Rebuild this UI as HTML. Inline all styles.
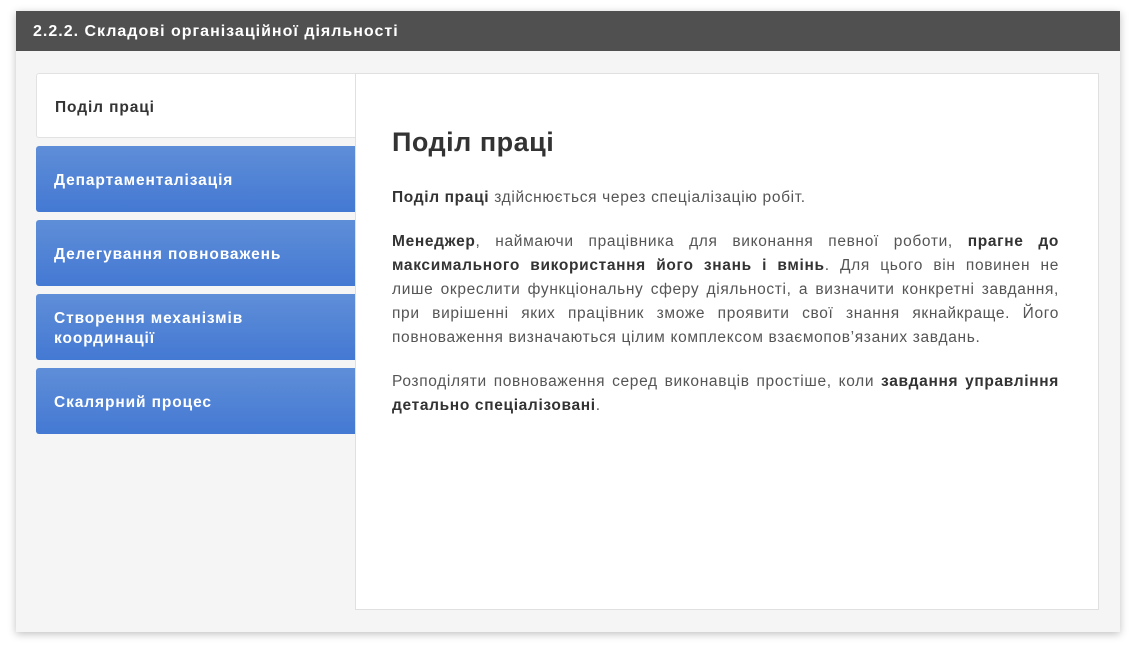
<!DOCTYPE html><html><head><meta charset="utf-8"><style>
body{margin:0;width:1136px;height:653px;background:#fff;font-family:"Liberation Sans","DejaVu Sans",sans-serif;position:relative;overflow:hidden}
.card{position:absolute;left:16px;top:11px;width:1104px;height:621px;background:#f5f5f5;box-shadow:0 2px 8px rgba(0,0,0,.25)}
.hd{height:40px;background:#505050;color:#fff;font-weight:bold;font-size:16px;line-height:42px;padding-left:17px;letter-spacing:1px}
.tab{position:absolute;left:20px;width:319px;height:66px;border-radius:3px 0 0 3px;box-sizing:border-box;padding-left:18px;padding-top:4px;display:flex;align-items:center;font-weight:bold;font-size:15.5px;color:#fff;background:linear-gradient(#5f8ed8,#4479d3);line-height:20px;letter-spacing:.9px}
.tab.a{background:#fff;color:#333;top:62px;height:65px;border:1px solid #e2e2e2;border-right:none}
.panel{position:absolute;left:339px;top:62px;width:744px;height:537px;background:#fff;border:1px solid #e0e0e0;box-sizing:border-box;padding:48px 39px 0 36px;color:#555;font-size:15.5px;line-height:24px;text-align:justify;letter-spacing:.66px}
h1{margin:0 0 24px;font-size:27px;color:#333;line-height:40px;letter-spacing:.5px}
p{margin:0 0 20px}b{color:#333}
</style></head><body><div class="card"><div class="hd">2.2.2. Складові організаційної діяльності</div>
<div class="tab a">Поділ праці</div>
<div class="tab" style="top:135px">Департаменталізація</div>
<div class="tab" style="top:209px">Делегування повноважень</div>
<div class="tab" style="top:283px">Створення механізмів<br>координації</div>
<div class="tab" style="top:357px">Скалярний процес</div>
<div class="panel"><h1>Поділ праці</h1>
<p><b>Поділ праці</b> здійснюється через спеціалізацію робіт.</p>
<p><b>Менеджер</b>, наймаючи працівника для виконання певної роботи, <b>прагне до максимального використання його знань і вмінь</b>. Для цього він повинен не лише&nbsp;окреслити функціональну сферу діяльності, а визначити конкретні завдання, при вирішенні яких працівник зможе проявити свої знання якнайкраще. Його повноваження визначаються цілим комплексом взаємопов’язаних завдань.</p>
<p>Розподіляти повноваження серед виконавців простіше, коли <b>завдання управління детально спеціалізовані</b>.</p>
</div></div></body></html>
